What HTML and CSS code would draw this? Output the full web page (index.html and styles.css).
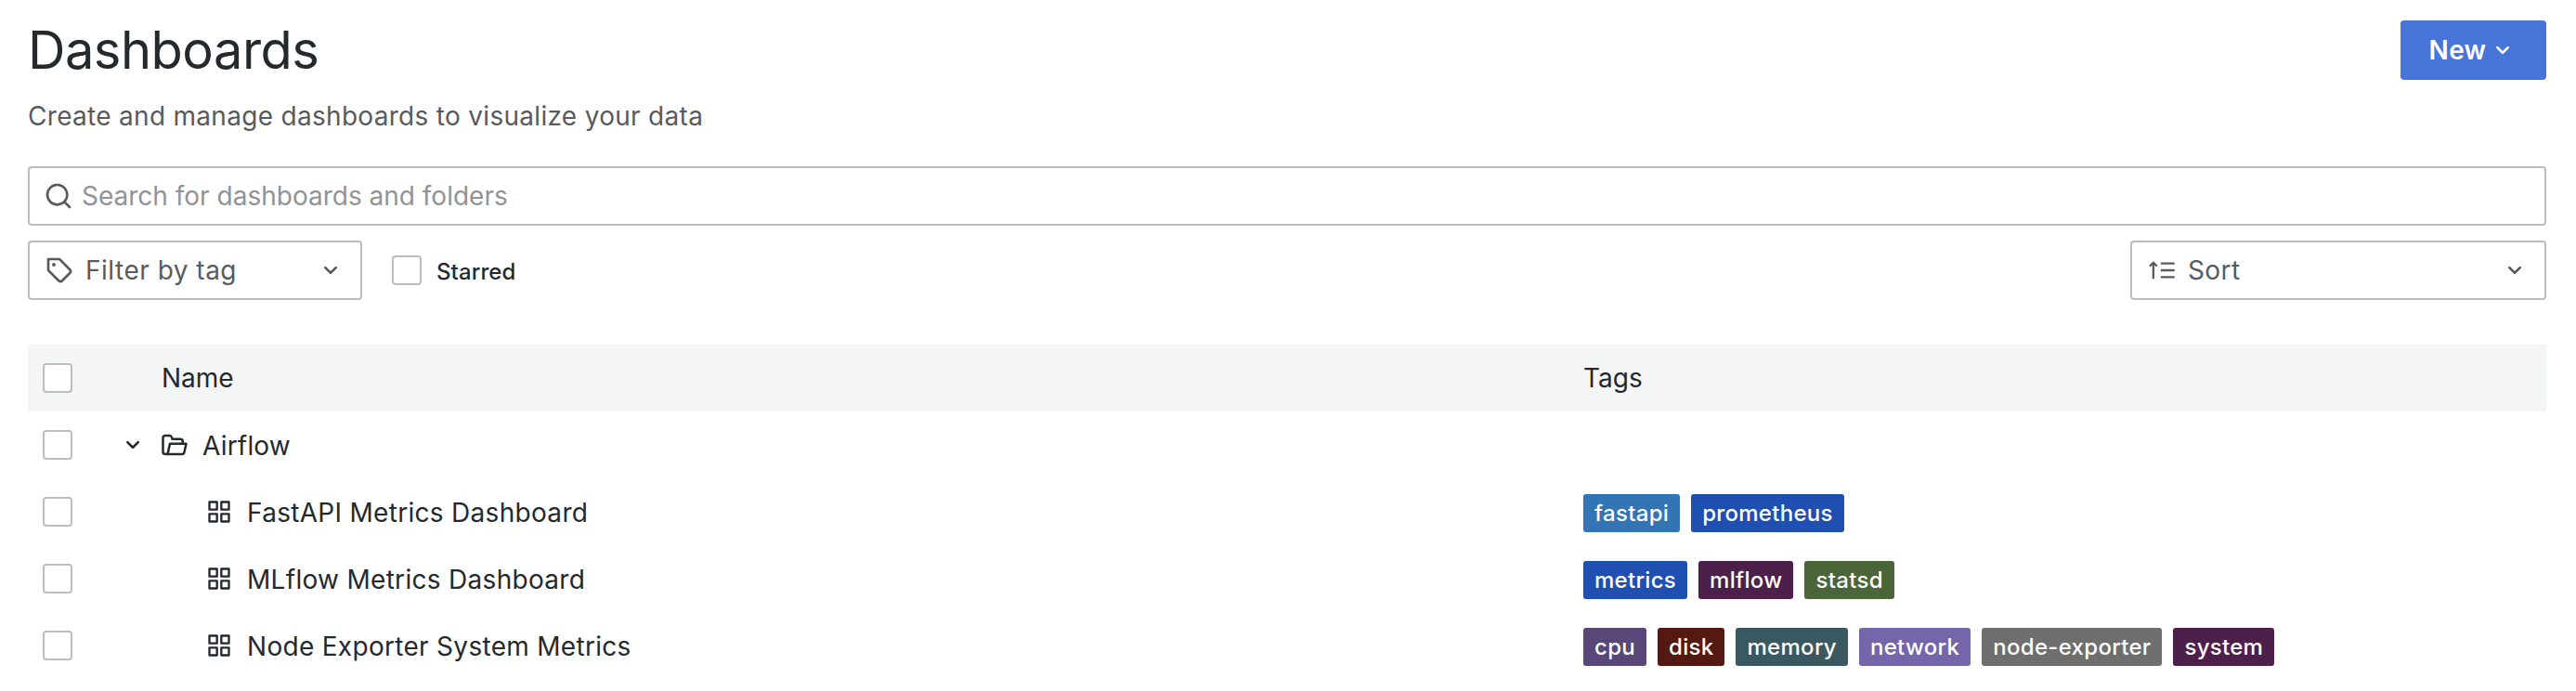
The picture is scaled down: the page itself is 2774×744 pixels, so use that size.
FILE: index.html
```html
<!DOCTYPE html>
<html lang="en">
<head>
<meta charset="utf-8">
<title>Dashboards</title>
<link rel="stylesheet" href="styles.css">
</head>
<body>
<svg class="defs" width="0" height="0" aria-hidden="true">
  <symbol id="i-down" viewBox="0 0 24 24"><path d="M17,9.17a1,1,0,0,0-1.41,0L12,12.71,8.46,9.17a1,1,0,0,0-1.41,0,1,1,0,0,0,0,1.42l4.24,4.24a1,1,0,0,0,1.42,0L17,10.59A1,1,0,0,0,17,9.17Z"/></symbol>
  <symbol id="i-apps" viewBox="0 0 24 24"><path d="M10,13H3a1,1,0,0,0-1,1v7a1,1,0,0,0,1,1h7a1,1,0,0,0,1-1V14A1,1,0,0,0,10,13ZM9,20H4V15H9ZM21,2H14a1,1,0,0,0-1,1v7a1,1,0,0,0,1,1h7a1,1,0,0,0,1-1V3A1,1,0,0,0,21,2ZM20,9H15V4h5Zm1,4H14a1,1,0,0,0-1,1v7a1,1,0,0,0,1,1h7a1,1,0,0,0,1-1V14A1,1,0,0,0,21,13Zm-1,7H15V15h5ZM10,2H3A1,1,0,0,0,2,3v7a1,1,0,0,0,1,1h7a1,1,0,0,0,1-1V3A1,1,0,0,0,10,2ZM9,9H4V4H9Z"/></symbol>
</svg>
<main class="page">
  <header class="head">
    <div class="head-text">
      <h1 class="title">Dashboards</h1>
      <p class="subtitle">Create and manage dashboards to visualize your data</p>
    </div>
    <button class="new-btn">New<svg class="ico-new"><use href="#i-down"/></svg></button>
  </header>

  <div class="field search">
    <svg class="ico-search" viewBox="0 0 24 24"><path d="M21.71,20.29,18,16.61A9,9,0,1,0,16.61,18l3.68,3.68a1,1,0,0,0,1.42,0A1,1,0,0,0,21.71,20.29ZM11,18a7,7,0,1,1,7-7A7,7,0,0,1,11,18Z"/></svg>
    <span class="placeholder">Search for dashboards and folders</span>
  </div>

  <div class="filters">
    <div class="field filter-tag">
      <svg class="ico-tag" viewBox="0 0 24 24"><path d="M7.5,6A1.5,1.5,0,1,0,9,7.5,1.5,1.5,0,0,0,7.5,6Zm13.62,4.71L12.71,2.29A1,1,0,0,0,12,2H3A1,1,0,0,0,2,3v9a1,1,0,0,0,.29.71l8.42,8.41a3,3,0,0,0,4.24,0L21.12,15a3,3,0,0,0,0-4.24Zm-1.41,2.82h0l-6.18,6.17a1,1,0,0,1-1.41,0L4,11.59V4h7.59l8.12,8.12a1,1,0,0,1,0,1.41Z"/></svg>
      <span class="value">Filter by tag</span>
      <svg class="ico-caret"><use href="#i-down"/></svg>
    </div>
    <label class="starred"><span class="check"></span><span class="starred-text">Starred</span></label>
    <div class="field sort">
      <svg class="ico-sort" viewBox="0 0 28 24"><path d="M6 20V5M2.6 8.2 6 4.8l3.4 3.4M13 5.5h13M13 12h13M13 18.5h13"/></svg>
      <span class="value">Sort</span>
      <svg class="ico-caret"><use href="#i-down"/></svg>
    </div>
  </div>

  <section class="table">
    <div class="row row-head">
      <span class="check"></span>
      <span class="name name-head">Name</span>
      <span class="tags-head">Tags</span>
    </div>
    <div class="row">
      <span class="check"></span>
      <span class="name name-folder">
        <svg class="ico-toggle"><use href="#i-down"/></svg>
        <svg class="ico-folder" viewBox="0 0 24 24"><path d="M22.78,10.37A1,1,0,0,0,22,10H20V9a3,3,0,0,0-3-3H10.72l-.32-1A3,3,0,0,0,7.56,3H4A3,3,0,0,0,1,6V18a3,3,0,0,0,3,3H18.4a3,3,0,0,0,2.92-2.35L23,11.22A1,1,0,0,0,22.78,10.37ZM5.37,18.22a1,1,0,0,1-1,.78H4a1,1,0,0,1-1-1V6A1,1,0,0,1,4,5H7.56a1,1,0,0,1,1,.68l.54,1.64A1,1,0,0,0,10,8h7a1,1,0,0,1,1,1v1H8a1,1,0,0,0-1,.78Zm14,0a1,1,0,0,1-1,.78H7.21a1.42,1.42,0,0,0,.08-.22L8.8,12H20.75Z"/></svg>
        <span class="label">Airflow</span>
      </span>
    </div>
    <div class="row">
      <span class="check"></span>
      <span class="name name-dash"><svg class="ico-apps"><use href="#i-apps"/></svg><span class="label">FastAPI Metrics Dashboard</span></span>
      <span class="tags"><span class="tag t-sky">fastapi</span><span class="tag t-blue">prometheus</span></span>
    </div>
    <div class="row">
      <span class="check"></span>
      <span class="name name-dash"><svg class="ico-apps"><use href="#i-apps"/></svg><span class="label">MLflow Metrics Dashboard</span></span>
      <span class="tags"><span class="tag t-blue">metrics</span><span class="tag t-plum">mlflow</span><span class="tag t-green">statsd</span></span>
    </div>
    <div class="row">
      <span class="check"></span>
      <span class="name name-dash"><svg class="ico-apps"><use href="#i-apps"/></svg><span class="label">Node Exporter System Metrics</span></span>
      <span class="tags"><span class="tag t-violet">cpu</span><span class="tag t-maroon">disk</span><span class="tag t-teal">memory</span><span class="tag t-lilac">network</span><span class="tag t-grey">node-exporter</span><span class="tag t-plum">system</span></span>
    </div>
  </section>
</main>
</body>
</html>
```

FILE: styles.css
```css
* { box-sizing: border-box; }
html, body { margin: 0; background: #fff; }
body { font-family: Inter, "Liberation Sans", sans-serif; color: #24292e; }
.defs { position: absolute; }
svg { fill: currentColor; flex: none; display: block; }

.page { padding: 22px 32px 0 30px; }

.head { display: flex; justify-content: space-between; align-items: flex-start; }
.title { margin: 0; font-size: 56px; line-height: 64px; font-weight: 400; letter-spacing: -0.5px; }
.subtitle { margin: 19px 0 0; font-size: 28px; line-height: 40px; color: #585b5e; letter-spacing: 0.3px; }

.new-btn {
  width: 157px; height: 64px; border: 0; border-radius: 4px;
  background: #4774d8; color: #fff;
  font: 600 28px/1 Inter, sans-serif; letter-spacing: 0.3px;
  display: flex; align-items: center; justify-content: center; gap: 2px;
  padding: 0;
}
.ico-new { width: 32px; height: 32px; }

.field {
  display: flex; align-items: center; height: 64px;
  border: 2px solid #bcbdbf; border-radius: 4px; background: #fff;
  font-size: 28px; color: #585b5e;
}
.search { margin-top: 34px; padding-left: 15px; gap: 9px; }
.ico-search { width: 32px; height: 32px; color: #585b5e; }
.placeholder { color: #919396; }

.filters { display: flex; align-items: center; margin-top: 16px; }
.filter-tag { width: 360px; padding: 0 16px; gap: 12px; letter-spacing: 0.5px; }
.sort { width: 448px; margin-left: auto; padding: 0 16px; gap: 12px; letter-spacing: 0.4px; }
.value { flex: 1; }
.ico-tag { width: 32px; height: 32px; }
.ico-sort { width: 32px; height: 28px; fill: none; stroke: currentColor; stroke-width: 2; }
.ico-caret { width: 32px; height: 32px; }

.starred { display: flex; align-items: center; gap: 16px; margin-left: 32px; font-size: 24px; font-weight: 500; }
.starred-text { padding-top: 2px; letter-spacing: 0.1px; }

.check { display: block; flex: none; width: 32px; height: 32px; border: 2px solid #bcbdbf; border-radius: 4px; background: #fff; }

.table { margin-top: 48px; }
.row { display: flex; align-items: center; height: 72px; padding-left: 16px; font-size: 28px; }
.row-head { background: #f4f5f5; }
.name { width: 1627px; display: flex; align-items: center; }
.name-head { padding-left: 96px; }
.name-folder { padding-left: 49px; letter-spacing: 0.2px; }
.name-dash { padding-left: 144px; letter-spacing: 0.3px; }
.label { padding-top: 1px; }
.ico-toggle { width: 32px; height: 32px; margin-right: 14px; }
.ico-folder { width: 30px; height: 30px; margin-right: 15px; }
.ico-apps { width: 28px; height: 28px; margin-right: 16px; }

.tags { display: flex; gap: 12px; padding-top: 3px; }
.tag { height: 41px; padding: 0 12px; border-radius: 3px; color: #fff; font-size: 24px; font-weight: 500; line-height: 41px; letter-spacing: 0.3px; }
.t-sky { background: #3274b4; }
.t-blue { background: #1f4fb0; }
.t-plum { background: #4d1f4b; }
.t-green { background: #4a6538; }
.t-violet { background: #584778; }
.t-maroon { background: #541a12; }
.t-teal { background: #3a5860; }
.t-lilac { background: #7566ab; }
.t-grey { background: #6e6e6e; }
```
